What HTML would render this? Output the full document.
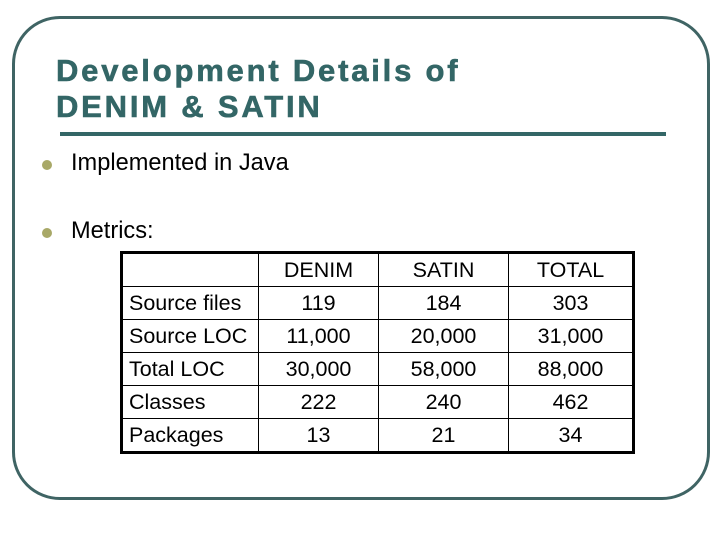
<!DOCTYPE html>
<html><head><meta charset="utf-8"><style>
body{margin:0;width:720px;height:540px;background:#fff;position:relative;overflow:hidden;font-family:"Liberation Sans",Arial,sans-serif}
.frame{position:absolute;left:12px;top:16px;width:692px;height:478px;border:3px solid #3f6464;border-radius:48px}
.title{position:absolute;left:56px;top:53px;color:#336666;font-weight:bold;font-size:31px;line-height:36px;letter-spacing:2.8px;-webkit-text-stroke:0.6px #336666}
.rule{position:absolute;left:60px;top:132px;width:606px;height:4px;background:#336666}
.b{position:absolute;left:71px;font-size:23.6px;color:#000}
.dot{position:absolute;left:42px;width:10px;height:10px;border-radius:50%;background:#a8a867}
table{position:absolute;left:120px;top:251px;border-collapse:collapse;border:3px solid #000;font-size:21.5px}
td{border:1.5px solid #000;height:32px;padding:0;text-align:center;line-height:32px}
td.l{text-align:left;padding-left:6px}
</style></head><body>
<div class="frame"></div>
<div class="title">Development Details of<br>DENIM &amp; SATIN</div>
<div class="rule"></div>
<div class="dot" style="top:160px"></div><div class="b" style="top:150px">Implemented in Java</div>
<div class="dot" style="top:228px"></div><div class="b" style="top:218px">Metrics:</div>
<table>
<tr><td class="l" style="width:129px"></td><td style="width:119px">DENIM</td><td style="width:129px">SATIN</td><td style="width:123px">TOTAL</td></tr>
<tr><td class="l">Source files</td><td>119</td><td>184</td><td>303</td></tr>
<tr><td class="l">Source LOC</td><td>11,000</td><td>20,000</td><td>31,000</td></tr>
<tr><td class="l">Total LOC</td><td>30,000</td><td>58,000</td><td>88,000</td></tr>
<tr><td class="l">Classes</td><td>222</td><td>240</td><td>462</td></tr>
<tr><td class="l">Packages</td><td>13</td><td>21</td><td>34</td></tr>
</table>
</body></html>
